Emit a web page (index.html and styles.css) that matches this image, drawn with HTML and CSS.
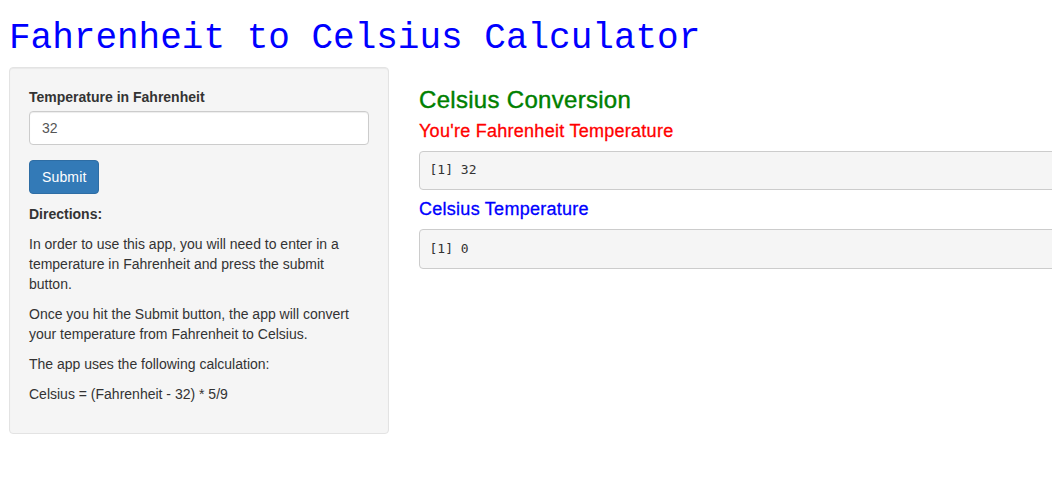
FILE: index.html
```html
<!DOCTYPE html>
<html>
<head>
<meta charset="utf-8">
<title>Fahrenheit to Celsius Calculator</title>
<link rel="stylesheet" href="styles.css">
</head>
<body>
<div class="page">
  <h1 class="title">Fahrenheit to Celsius Calculator</h1>
  <div class="row">
    <div class="sidebar">
      <div class="well">
        <div class="form-group">
          <label class="label" for="temp">Temperature in Fahrenheit</label>
          <input class="input" id="temp" type="text" value="32">
        </div>
        <div class="btn-wrap"><button class="btn" type="button">Submit</button></div>
        <p class="text strong">Directions:</p>
        <p class="text">In order to use this app, you will need to enter in a temperature in Fahrenheit and press the submit button.</p>
        <p class="text">Once you hit the Submit button, the app will convert your temperature from Fahrenheit to Celsius.</p>
        <p class="text">The app uses the following calculation:</p>
        <p class="text">Celsius = (Fahrenheit - 32) * 5/9</p>
      </div>
    </div>
    <div class="main">
      <h3 class="heading green">Celsius Conversion</h3>
      <h4 class="subheading red">You're Fahrenheit Temperature</h4>
      <pre class="output">[1] 32</pre>
      <h4 class="subheading blue">Celsius Temperature</h4>
      <pre class="output">[1] 0</pre>
    </div>
  </div>
</div>
</body>
</html>
```

FILE: styles.css
```css
html, body {
  margin: 0;
  padding: 0;
  background: #fff;
  overflow: hidden;
}
body {
  font-family: "Liberation Sans", Arial, sans-serif;
  font-size: 14px;
  line-height: 20px;
  color: #333;
}
.page {
  padding-left: 9px;
  width: 1043px;
  overflow: hidden;
}
.title {
  font-family: "Liberation Mono", "Courier New", monospace;
  font-weight: normal;
  font-size: 36px;
  line-height: 39.6px;
  color: #0000ff;
  margin: 19px 0 8px 0;
}
.row {
  display: flex;
  align-items: flex-start;
  gap: 30px;
}
.sidebar {
  flex: 0 0 380px;
  width: 380px;
}
.well {
  background: #f5f5f5;
  border: 1px solid #e3e3e3;
  border-radius: 4px;
  padding: 19px;
  box-shadow: inset 0 1px 1px rgba(0,0,0,0.05);
}
.form-group {
  margin-bottom: 15px;
}
.label {
  display: inline-block;
  font-weight: bold;
  margin-bottom: 4px;
}
.input {
  display: block;
  box-sizing: border-box;
  width: 100%;
  height: 34px;
  padding: 6px 12px;
  font-family: "Liberation Sans", Arial, sans-serif;
  font-size: 14px;
  color: #555;
  background: #fff;
  border: 1px solid #ccc;
  border-radius: 4px;
  box-shadow: inset 0 1px 1px rgba(0,0,0,0.075);
  margin: 0;
}
.btn-wrap {
  margin-bottom: 10px;
}
.btn {
  display: inline-block;
  height: 34px;
  padding: 6px 12px;
  font-family: "Liberation Sans", Arial, sans-serif;
  font-size: 14px;
  line-height: 20px;
  color: #fff;
  background: #337ab7;
  border: 1px solid #2e6da4;
  border-radius: 4px;
  margin: 0;
  letter-spacing: 0.15px;
}
.text {
  margin: 0 0 10px 0;
}
.strong {
  font-weight: bold;
}
.main {
  flex: 0 0 680px;
  width: 680px;
}
.heading {
  font-size: 24px;
  line-height: 26.4px;
  font-weight: normal;
  margin: 20px 0 9px 0;
  letter-spacing: 0.3px;
  -webkit-text-stroke: 0.4px currentColor;
}
.subheading {
  font-size: 18px;
  line-height: 19.8px;
  font-weight: normal;
  margin: 9px 0 9px 0;
  letter-spacing: 0.27px;
  -webkit-text-stroke: 0.3px currentColor;
}
.green { color: #008000; }
.red { color: #ff0000; }
.blue { color: #0000ff; }
.output {
  font-family: "DejaVu Sans Mono", Menlo, monospace;
  font-size: 13px;
  line-height: 18.57px;
  color: #333;
  background: #f5f5f5;
  border: 1px solid #ccc;
  border-radius: 4px;
  padding: 9.5px;
  margin: 0 0 10px 0;
}
```
